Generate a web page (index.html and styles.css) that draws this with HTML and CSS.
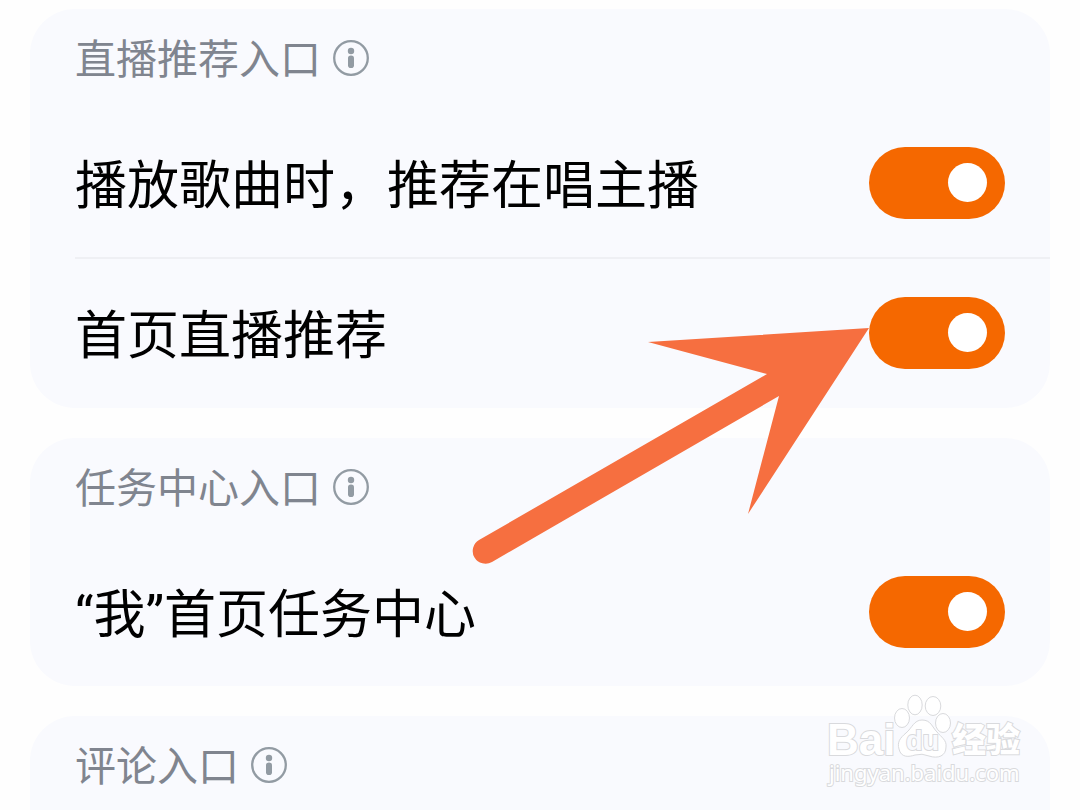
FILE: index.html
```html
<!DOCTYPE html>
<html lang="zh-CN">
<head>
<meta charset="utf-8">
<meta name="viewport" content="width=device-width, initial-scale=1">
<title>入口设置</title>
<link rel="stylesheet" href="styles.css">
</head>
<body>
<svg class="defs" aria-hidden="true">
  <symbol id="info" viewBox="0 0 36 36">
    <circle cx="18" cy="18" r="16.8" fill="none" stroke="currentColor" stroke-width="2.3"/>
    <circle cx="18" cy="11" r="3.2" fill="currentColor"/>
    <rect x="15" y="15.5" width="6" height="12.5" rx="2.8" fill="currentColor"/>
  </symbol>
</svg>
<main class="page">
  <section class="card">
    <header class="card-head">
      <h2 class="card-title">直播推荐入口</h2>
      <button class="info" type="button" aria-label="直播推荐入口说明"><svg class="info-icon"><use href="#info"/></svg></button>
    </header>
    <div class="row">
      <label class="row-label" for="playing">播放歌曲时，推荐在唱主播</label>
      <input class="switch" type="checkbox" role="switch" id="playing" checked>
    </div>
    <div class="row">
      <label class="row-label" for="home-live">首页直播推荐</label>
      <input class="switch" type="checkbox" role="switch" id="home-live" checked>
      <svg class="arrow" viewBox="0 0 400 240" aria-hidden="true">
        <path fill="#f66f40" d="M399 1 178 15 297 47 9 213A12.6 12.6 0 0 0 22 235L309 69 278 187Z"/>
      </svg>
    </div>
  </section>
  <section class="card">
    <header class="card-head">
      <h2 class="card-title">任务中心入口</h2>
      <button class="info" type="button" aria-label="任务中心入口说明"><svg class="info-icon"><use href="#info"/></svg></button>
    </header>
    <div class="row">
      <label class="row-label" for="task">“我”首页任务中心</label>
      <input class="switch" type="checkbox" role="switch" id="task" checked>
    </div>
  </section>
  <section class="card card-last">
    <header class="card-head">
      <h2 class="card-title">评论入口</h2>
      <button class="info" type="button" aria-label="评论入口说明"><svg class="info-icon"><use href="#info"/></svg></button>
    </header>
    <svg class="watermark" viewBox="0 0 200 96" role="img" aria-label="Baidu 经验 jingyan.baidu.com">
      <g class="mark">
        <text class="mark-bai" x="0" y="61">Bai</text>
        <ellipse cx="75" cy="24" rx="7.5" ry="9.5"/>
        <ellipse cx="88" cy="11" rx="7.2" ry="9.8"/>
        <ellipse cx="106" cy="12" rx="7.8" ry="9.5"/>
        <ellipse cx="116" cy="29" rx="7.5" ry="9.5"/>
        <path d="M95 26C87 26 85 34 79 39C73 44 70 48 72 55C74 64 82 63 88 61Q95 59 102 62C111 65 119 62 119 53C120 46 114 43 110 38C105 33 104 26 95 26Z"/>
        <text class="mark-du" x="79" y="56">du</text>
        <text class="mark-cn" x="125" y="58">经验</text>
        <text class="mark-url" x="2" y="87">jingyan.baidu.com</text>
      </g>
    </svg>
  </section>
</main>
</body>
</html>
```
FILE: styles.css
```css
* {
  box-sizing: border-box;
}

body {
  margin: 0;
  background: #fefefe;
  color: #000;
  font-family: "Noto Sans CJK SC", sans-serif;
}

.defs {
  position: absolute;
  width: 0;
  height: 0;
}

.page {
  display: flex;
  flex-direction: column;
  gap: 30px;
  min-height: 100vh;
  padding: 9px 30px 0;
}

.card {
  padding-left: 45px;
  border-radius: 45px;
  background: #f9fafe;
}

.card-last {
  position: relative;
  flex: 1;
  border-radius: 45px 45px 0 0;
}

.card-head {
  display: flex;
  align-items: center;
  gap: 12px;
  padding-top: 19px;
}

.card-title {
  margin: 0;
  padding-bottom: 4px;
  color: #80858f;
  font-size: 41px;
  font-weight: 400;
  line-height: 56px;
}

.info {
  display: flex;
  padding: 0;
  border: 0;
  background: none;
  color: #929ba3;
}

.info-icon {
  width: 36px;
  height: 36px;
}

.row {
  position: relative;
  display: flex;
  align-items: center;
  justify-content: space-between;
  min-height: 149px;
  padding-right: 45px;
}

.card-head + .row {
  margin-top: 20px;
}

.row + .row {
  min-height: 151px;
  padding-bottom: 2px;
  border-top: 2px solid #eff0f4;
}

.row-label {
  padding-top: 8px;
  font-family: Roboto, "Noto Sans CJK SC", sans-serif;
  font-size: 52px;
  font-weight: 400;
  line-height: 76px;
}

.switch {
  display: flex;
  flex: none;
  align-items: center;
  justify-content: flex-end;
  width: 136px;
  height: 72px;
  margin: 0;
  padding-right: 18px;
  border-radius: 36px;
  appearance: none;
  background: #f56800;
}

.switch::before {
  content: "";
  width: 39px;
  height: 39px;
  border-radius: 50%;
  background: #fff;
}

.switch:not(:checked) {
  justify-content: flex-start;
  padding-left: 18px;
  background: #c9ccd3;
}

.arrow {
  position: absolute;
  top: 68px;
  right: 180px;
  width: 400px;
  height: 240px;
  pointer-events: none;
}

.watermark {
  position: absolute;
  top: -22px;
  right: 23px;
  width: 200px;
  height: 96px;
  overflow: visible;
}

.mark {
  fill: #fff;
  stroke: #d9dadd;
  stroke-width: 1;
}

.mark-bai,
.mark-du {
  font-family: "Liberation Sans", sans-serif;
  font-weight: 700;
}

.mark text {
  paint-order: stroke;
  stroke-width: 2;
}

.mark-bai {
  font-size: 44px;
}

.mark .mark-du {
  fill: #f9fafe;
  font-size: 27px;
}

.mark-cn {
  font-size: 34px;
  font-weight: 900;
}

.mark-url {
  font-family: "Noto Sans", sans-serif;
  font-size: 22px;
}
```
